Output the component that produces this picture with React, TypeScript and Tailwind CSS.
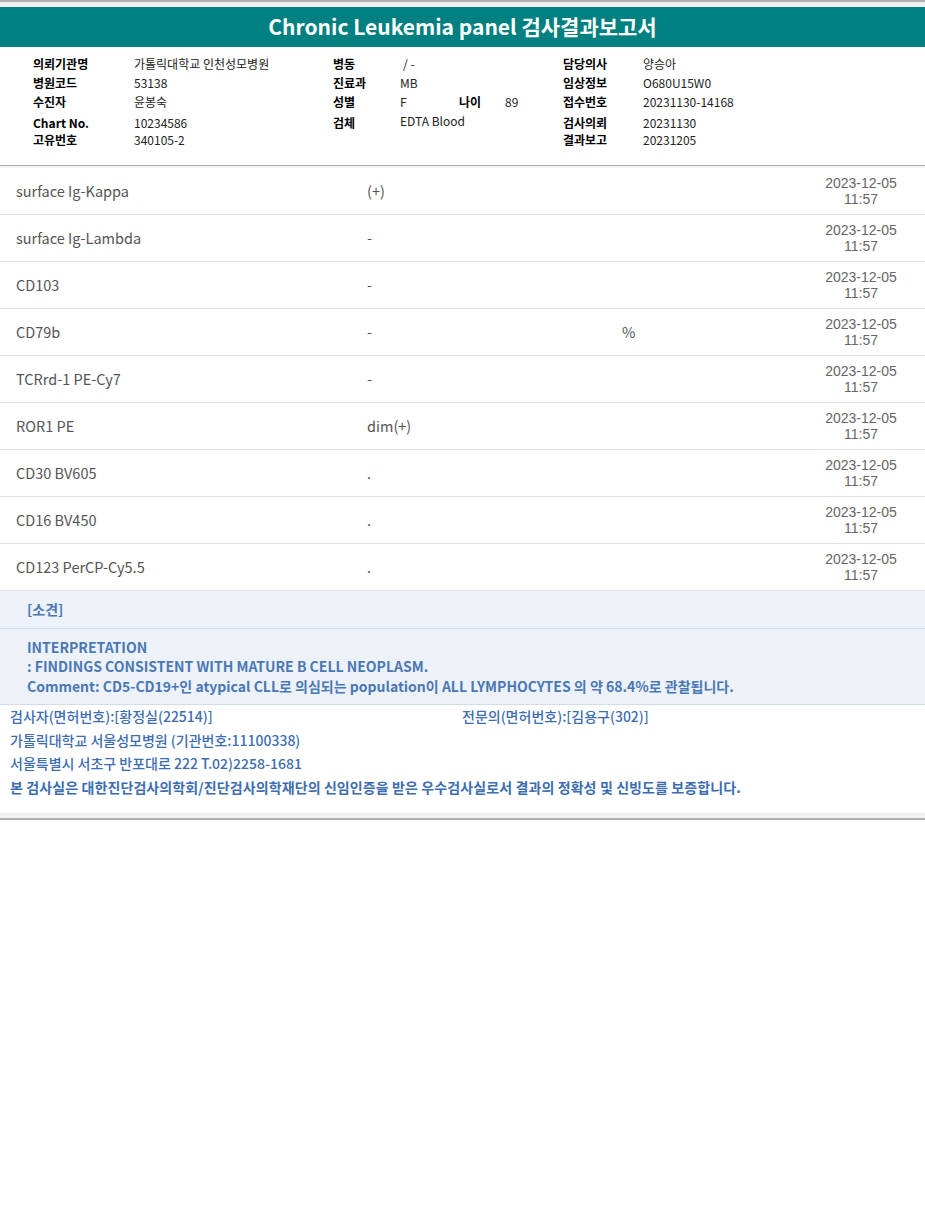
import React from 'react';

const rows = [
  { name: 'surface Ig-Kappa', value: '(+)', unit: '' },
  { name: 'surface Ig-Lambda', value: '-', unit: '' },
  { name: 'CD103', value: '-', unit: '' },
  { name: 'CD79b', value: '-', unit: '%' },
  { name: 'TCRrd-1 PE-Cy7', value: '-', unit: '' },
  { name: 'ROR1 PE', value: 'dim(+)', unit: '' },
  { name: 'CD30 BV605', value: '.', unit: '' },
  { name: 'CD16 BV450', value: '.', unit: '' },
  { name: 'CD123 PerCP-Cy5.5', value: '.', unit: '' },
];

const font = { fontFamily: '"Noto Sans CJK KR", "Noto Sans", sans-serif' };

const Label: React.FC<{ children: React.ReactNode; w: string }> = ({ children, w }) => (
  <div className={`${w} font-bold text-black`}>{children}</div>
);

export default function App() {
  return (
    <div className="w-[925px] bg-white font-['Noto_Sans_CJK_KR','Noto_Sans',sans-serif]">
      <div className="border-t-2 border-[#b0b0b0] bg-[#f0f0f0] pt-[5px]">
        <header className="h-[40px] bg-[#008080] flex items-center justify-center text-white text-[21px] font-bold">
          Chronic Leukemia panel 검사결과보고서
        </header>
      </div>

      <section className="pt-[7px] pb-[16px] text-[12px] leading-[19px] text-[#222]">
        <div className="flex pl-[33px]">
          <Label w="w-[101px]">의뢰기관명</Label>
          <div className="w-[199px]">가톨릭대학교 인천성모병원</div>
          <Label w="w-[67px]">병동</Label>
          <div className="w-[163px] pl-[3px]">/ -</div>
          <Label w="w-[80px]">담당의사</Label>
          <div>양승아</div>
        </div>
        <div className="flex pl-[33px]">
          <Label w="w-[101px]">병원코드</Label>
          <div className="w-[199px]">53138</div>
          <Label w="w-[67px]">진료과</Label>
          <div className="w-[163px]">MB</div>
          <Label w="w-[80px]">임상정보</Label>
          <div>O680U15W0</div>
        </div>
        <div className="flex pl-[33px]">
          <Label w="w-[101px]">수진자</Label>
          <div className="w-[199px]">윤봉숙</div>
          <Label w="w-[67px]">성별</Label>
          <div className="w-[163px] flex">
            <div className="w-[59px]">F</div>
            <div className="w-[46px] font-bold text-black">나이</div>
            <div>89</div>
          </div>
          <Label w="w-[80px]">접수번호</Label>
          <div>20231130-14168</div>
        </div>
        <div className="flex pl-[33px] mt-[2px]">
          <Label w="w-[101px]">Chart No.</Label>
          <div className="w-[199px]">10234586</div>
          <Label w="w-[67px]">검체</Label>
          <div className="w-[163px] -mt-[2px]">EDTA Blood</div>
          <Label w="w-[80px]">검사의뢰</Label>
          <div>20231130</div>
        </div>
        <div className="flex pl-[33px] -mt-[2px]">
          <Label w="w-[101px]">고유번호</Label>
          <div className="w-[199px]">340105-2</div>
          <div className="w-[67px]" />
          <div className="w-[163px]" />
          <Label w="w-[80px]">결과보고</Label>
          <div>20231205</div>
        </div>
      </section>

      <div className="border-t border-[#a8a8a8] bg-[#f3f3f3] h-[3px]" />

      <section style={font}>
        {rows.map((r) => (
          <div
            key={r.name}
            className="h-[47px] flex items-center border-b border-[#e0e0e0] text-[#555]"
          >
            <div className="w-[367px] pl-[16px] text-[14.5px]">{r.name}</div>
            <div className="w-[255px] text-[14.5px]">{r.value}</div>
            <div className="w-[194px] text-[14.5px]">{r.unit}</div>
            <div className="w-[90px] text-center text-[14px] leading-[16.5px] text-[#666] font-['Liberation_Sans',sans-serif]">
              <div>2023-12-05</div>
              <div>11:57</div>
            </div>
          </div>
        ))}
      </section>

      <section className="bg-[#edf2f8] text-[#4a78b5] font-bold" style={font}>
        <div className="h-[38px] flex items-center pl-[27px] text-[14px] border-b border-[#d3dce8]">
          [소견]
        </div>
        <div className="pl-[27px] pt-[9px] pb-[8px] text-[14px] leading-[19px] border-b border-[#d3dce8]">
          <div>INTERPRETATION</div>
          <div>: FINDINGS CONSISTENT WITH MATURE B CELL NEOPLASM.</div>
          <div className="mt-[1px]">
            Comment: CD5-CD19+인 atypical CLL로 의심되는 population이 ALL LYMPHOCYTES 의 약 68.4%로 관찰됩니다.
          </div>
        </div>
      </section>

      <footer className="pl-[10px] pb-[13px] text-[14px] leading-[23.7px] text-[#3d6db1] font-medium" style={font}>
        <div className="flex">
          <div className="w-[452px]">검사자(면허번호):[황정실(22514)]</div>
          <div>전문의(면허번호):[김용구(302)]</div>
        </div>
        <div>가톨릭대학교 서울성모병원 (기관번호:11100338)</div>
        <div>서울특별시 서초구 반포대로 222 T.02)2258-1681</div>
        <div className="font-semibold tracking-[0.1px]">
          본 검사실은 대한진단검사의학회/진단검사의학재단의 신임인증을 받은 우수검사실로서 결과의 정확성 및 신빙도를 보증합니다.
        </div>
      </footer>
      <div className="bg-[#f0f0f0] h-[7px] border-b-2 border-[#b0b0b0]" />
    </div>
  );
}
